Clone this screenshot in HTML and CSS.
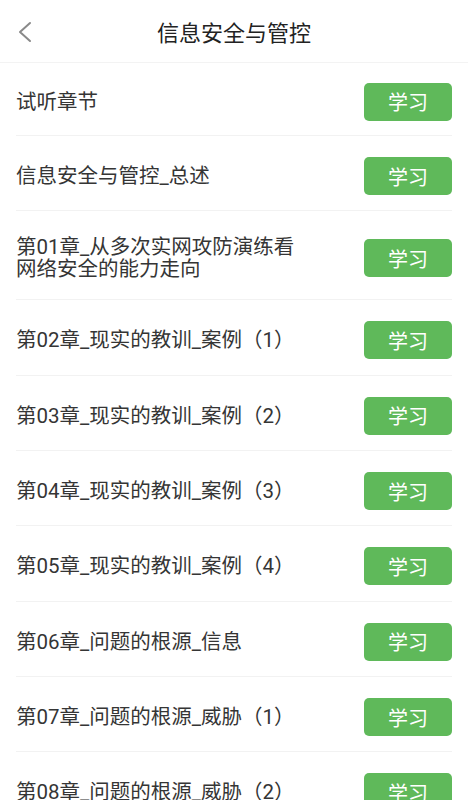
FILE: index.html
```html
<!DOCTYPE html>
<html lang="zh-CN">
<head>
  <meta charset="UTF-8">
  <meta name="viewport" content="width=device-width, initial-scale=1.0">
  <title>信息安全与管控</title>
  <link rel="stylesheet" href="styles.css">
</head>
<body>
  <div class="header">
    <svg class="back" width="16" height="22" viewBox="0 0 16 22">
      <path d="M13 2 L3 11 L13 20" fill="none" stroke="#8a8a8a" stroke-width="2" stroke-linecap="round" stroke-linejoin="round"/>
    </svg>
    <div class="title">信息安全与管控</div>
  </div>

  <!-- 章节列表 -->
  <div class="list">
    <div class="chapter">
      <div class="name">试听章节</div>
      <button class="study">学习</button>
    </div>
    <div class="chapter">
      <div class="name">信息安全与管控_总述</div>
      <button class="study">学习</button>
    </div>
    <div class="chapter">
      <div class="name">第01章_从多次实网攻防演练看网络安全的能力走向</div>
      <button class="study">学习</button>
    </div>
    <div class="chapter">
      <div class="name">第02章_现实的教训_案例（1）</div>
      <button class="study">学习</button>
    </div>
    <div class="chapter">
      <div class="name">第03章_现实的教训_案例（2）</div>
      <button class="study">学习</button>
    </div>
    <div class="chapter">
      <div class="name">第04章_现实的教训_案例（3）</div>
      <button class="study">学习</button>
    </div>
    <div class="chapter">
      <div class="name">第05章_现实的教训_案例（4）</div>
      <button class="study">学习</button>
    </div>
    <div class="chapter">
      <div class="name">第06章_问题的根源_信息</div>
      <button class="study">学习</button>
    </div>
    <div class="chapter">
      <div class="name">第07章_问题的根源_威胁（1）</div>
      <button class="study">学习</button>
    </div>
    <div class="chapter">
      <div class="name">第08章_问题的根源_威胁（2）</div>
      <button class="study">学习</button>
    </div>
  </div>
</body>
</html>
```

FILE: styles.css
```css
body {
  margin: 0;
  background-color: #fff;
  font-family: Roboto, "Noto Sans CJK SC", sans-serif;
  height: 800px;
  overflow: hidden;
}

/* 顶部标题栏 */
.header {
  height: 62px;
  display: flex;
  align-items: center;
  justify-content: center;
  position: relative;
  border-bottom: 1px solid #f3f3f3;
}

.back {
  position: absolute;
  left: 17px;
  top: 21px;
}

.title {
  font-size: 22px;
  color: #222;
  margin-top: -1px;
}

.list {
  padding: 0 16px;
}

.chapter {
  display: flex;
  align-items: center;
  justify-content: space-between;
  box-sizing: border-box;
  min-height: 75.33px;
  padding-top: 6px;
  border-bottom: 1px solid #f2f2f2;
}

.chapter:first-child {
  min-height: 73px;
  padding-top: 5px;
}

.name {
  max-width: 290px;
  font-size: 20.5px;
  line-height: 22px;
  padding: 19px 0;
  color: #353535;
}

.study {
  flex-shrink: 0;
  width: 88px;
  height: 38px;
  border: none;
  border-radius: 5px;
  background-color: #5fb95a;
  color: #fff;
  font-family: "Noto Sans CJK SC", sans-serif;
  font-size: 20px;
  padding: 0;
}
```
